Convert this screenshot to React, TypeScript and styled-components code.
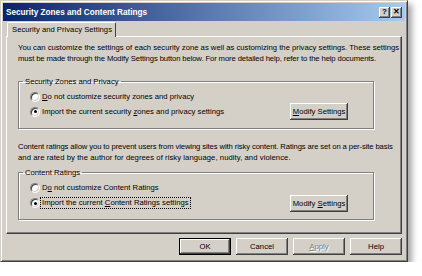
import React from 'react';
import styled, { createGlobalStyle } from 'styled-components';

const GlobalStyle = createGlobalStyle`
  body {
    margin: 0;
    background: #fff;
  }
`

const Window = styled.div`
  box-sizing: border-box;
  width: 408px;
  height: 262px;
  display: flex;
  flex-direction: column;
  padding: 2px;
  background: #d4d0c8;
  border: 1px solid;
  border-color: #d4d0c8 #404040 #404040 #d4d0c8;
  box-shadow: inset 1px 1px #fff, inset -1px -1px #808080, 4px 4px 6px rgba(0, 0, 0, 0.35);
  font-family: 'Liberation Sans', Arial, sans-serif;
  font-size: 7.7px;
  color: #000;
`

const TitleBar = styled.div`
  height: 18px;
  display: flex;
  align-items: center;
  justify-content: space-between;
  padding: 0 3px 0 3px;
  background: linear-gradient(to right, #0a246a, #a6caf0);
  color: #fff;
  font-weight: bold;
  font-size: 8.2px;
`

const CaptionButtons = styled.div`
  display: flex;
  gap: 1px;
`

const CaptionButton = styled.div`
  width: 11px;
  height: 11px;
  display: flex;
  align-items: center;
  justify-content: center;
  background: #d4d0c8;
  box-shadow: inset -1px -1px #404040, inset 1px 1px #fff, inset -2px -2px #808080;
  color: #000;
  font-weight: bold;
  font-size: 8px;
  line-height: 1;
`

const Body = styled.div`
  flex: 1;
  display: flex;
  flex-direction: column;
  padding: 0 3px 4px 3px;
`

const Tab = styled.div`
  align-self: flex-start;
  position: relative;
  z-index: 1;
  margin: 1px 0 -1px 1px;
  padding: 0 3px 0 4px;
  height: 14px;
  line-height: 14px;
  background: #d4d0c8;
  border: 1px solid;
  border-color: #fff #404040 transparent #fff;
  border-bottom: none;
  border-radius: 2px 2px 0 0;
`

const Panel = styled.div`
  flex: 1;
  padding: 5px 0 0 11px;
  border: 1px solid;
  border-color: #fff #404040 #404040 #fff;
  box-shadow: inset -1px -1px #808080;
`

const Para = styled.p<{ $top?: number }>`
  margin: ${p => p.$top ?? 0}px 0 0 0;
  line-height: 11px;
  white-space: nowrap;
`

const Line = styled.span<{ $ls?: number }>`
  display: block;
  letter-spacing: ${p => p.$ls ?? 0}px;
`

const Group = styled.fieldset<{ $top: number; $bottom: number }>`
  box-sizing: border-box;
  width: 356px;
  margin: ${p => p.$top}px 0 0 0;
  padding: 2px 0 ${p => p.$bottom}px 4px;
  border: 1px solid #808080;
  box-shadow: inset 1px 1px #fff, 1px 1px #fff;
`

const Legend = styled.legend`
  margin-left: 0;
  padding: 0 2px;
  line-height: 11px;
`

const Row = styled.div<{ $h?: number }>`
  height: ${p => p.$h ?? 15}px;
  display: flex;
  align-items: center;
  justify-content: space-between;
  padding: 0 25px 0 7px;
`

const RadioLabel = styled.label`
  display: flex;
  align-items: center;
`

const RadioCircle = styled.span`
  box-sizing: border-box;
  width: 10px;
  height: 10px;
  display: flex;
  align-items: center;
  justify-content: center;
  border-radius: 50%;
  background: #fff;
  border: 1px solid;
  border-color: #808080 #fff #fff #808080;
  box-shadow: inset 1px 1px #404040, inset -1px -1px #d4d0c8;
`

const Dot = styled.span`
  width: 3px;
  height: 3px;
  border-radius: 50%;
  background: #000;
`

const LabelText = styled.span<{ $focus?: boolean }>`
  padding: 0 1px;
  border: 1px dotted ${p => (p.$focus ? '#000' : 'transparent')};
  line-height: 10px;
`

const Button = styled.button<{ $default?: boolean; $w?: number }>`
  box-sizing: border-box;
  width: ${p => p.$w ?? 52}px;
  height: 17px;
  flex-shrink: 0;
  padding: 0;
  font: inherit;
  white-space: nowrap;
  color: #000;
  background: #d4d0c8;
  border: ${p => (p.$default ? '1px solid #000' : 'none')};
  box-shadow: inset -1px -1px #404040, inset 1px 1px #fff, inset -2px -2px #808080;
  &:disabled {
    color: #808080;
    text-shadow: 1px 1px #fff;
  }
`

const Footer = styled.div`
  display: flex;
  justify-content: flex-end;
  gap: 5px;
  margin-top: 4px;
`

const Radio = ({ checked, focus, children }: { checked?: boolean; focus?: boolean; children: React.ReactNode }) => (
  <RadioLabel>
    <RadioCircle>{checked && <Dot />}</RadioCircle>
    <LabelText $focus={focus}>{children}</LabelText>
  </RadioLabel>
)

export default function App() {
  return (
    <>
      <GlobalStyle />
      <Window>
        <TitleBar>
          <span>Security Zones and Content Ratings</span>
          <CaptionButtons>
            <CaptionButton>?</CaptionButton>
            <CaptionButton>✕</CaptionButton>
          </CaptionButtons>
        </TitleBar>
        <Body>
          <Tab>Security and Privacy Settings</Tab>
          <Panel>
            <Para>
              <Line>You can customize the settings of each security zone as well as customizing the privacy settings. These settings</Line>
              <Line $ls={-0.12}>must be made through the Modify Settings button below. For more detailed help, refer to the help documents.</Line>
            </Para>
            <Group $top={12} $bottom={9}>
              <Legend>Security Zones and Privacy</Legend>
              <Row>
                <Radio><u>D</u>o not customize security zones and privacy</Radio>
              </Row>
              <Row>
                <Radio checked>Import the current security <u>z</u>ones and privacy settings</Radio>
                <Button $w={58}><u>M</u>odify Settings</Button>
              </Row>
            </Group>
            <Para $top={12}>
              <Line $ls={-0.12}>Content ratings allow you to prevent users from viewing sites with risky content. Ratings are set on a per-site basis</Line>
              <Line $ls={0.06}>and are rated by the author for degrees of risky language, nudity, and violence.</Line>
            </Para>
            <Group $top={4} $bottom={8}>
              <Legend>Content Ratings</Legend>
              <Row>
                <Radio>D<u>o</u> not customize Content Ratings</Radio>
              </Row>
              <Row $h={16}>
                <Radio checked focus>Import the current <u>C</u>ontent Ratings settings</Radio>
                <Button $w={58}>Modify <u>S</u>ettings</Button>
              </Row>
            </Group>
          </Panel>
          <Footer>
            <Button $default>OK</Button>
            <Button>Cancel</Button>
            <Button disabled><u>A</u>pply</Button>
            <Button>Help</Button>
          </Footer>
        </Body>
      </Window>
    </>
  )
}
